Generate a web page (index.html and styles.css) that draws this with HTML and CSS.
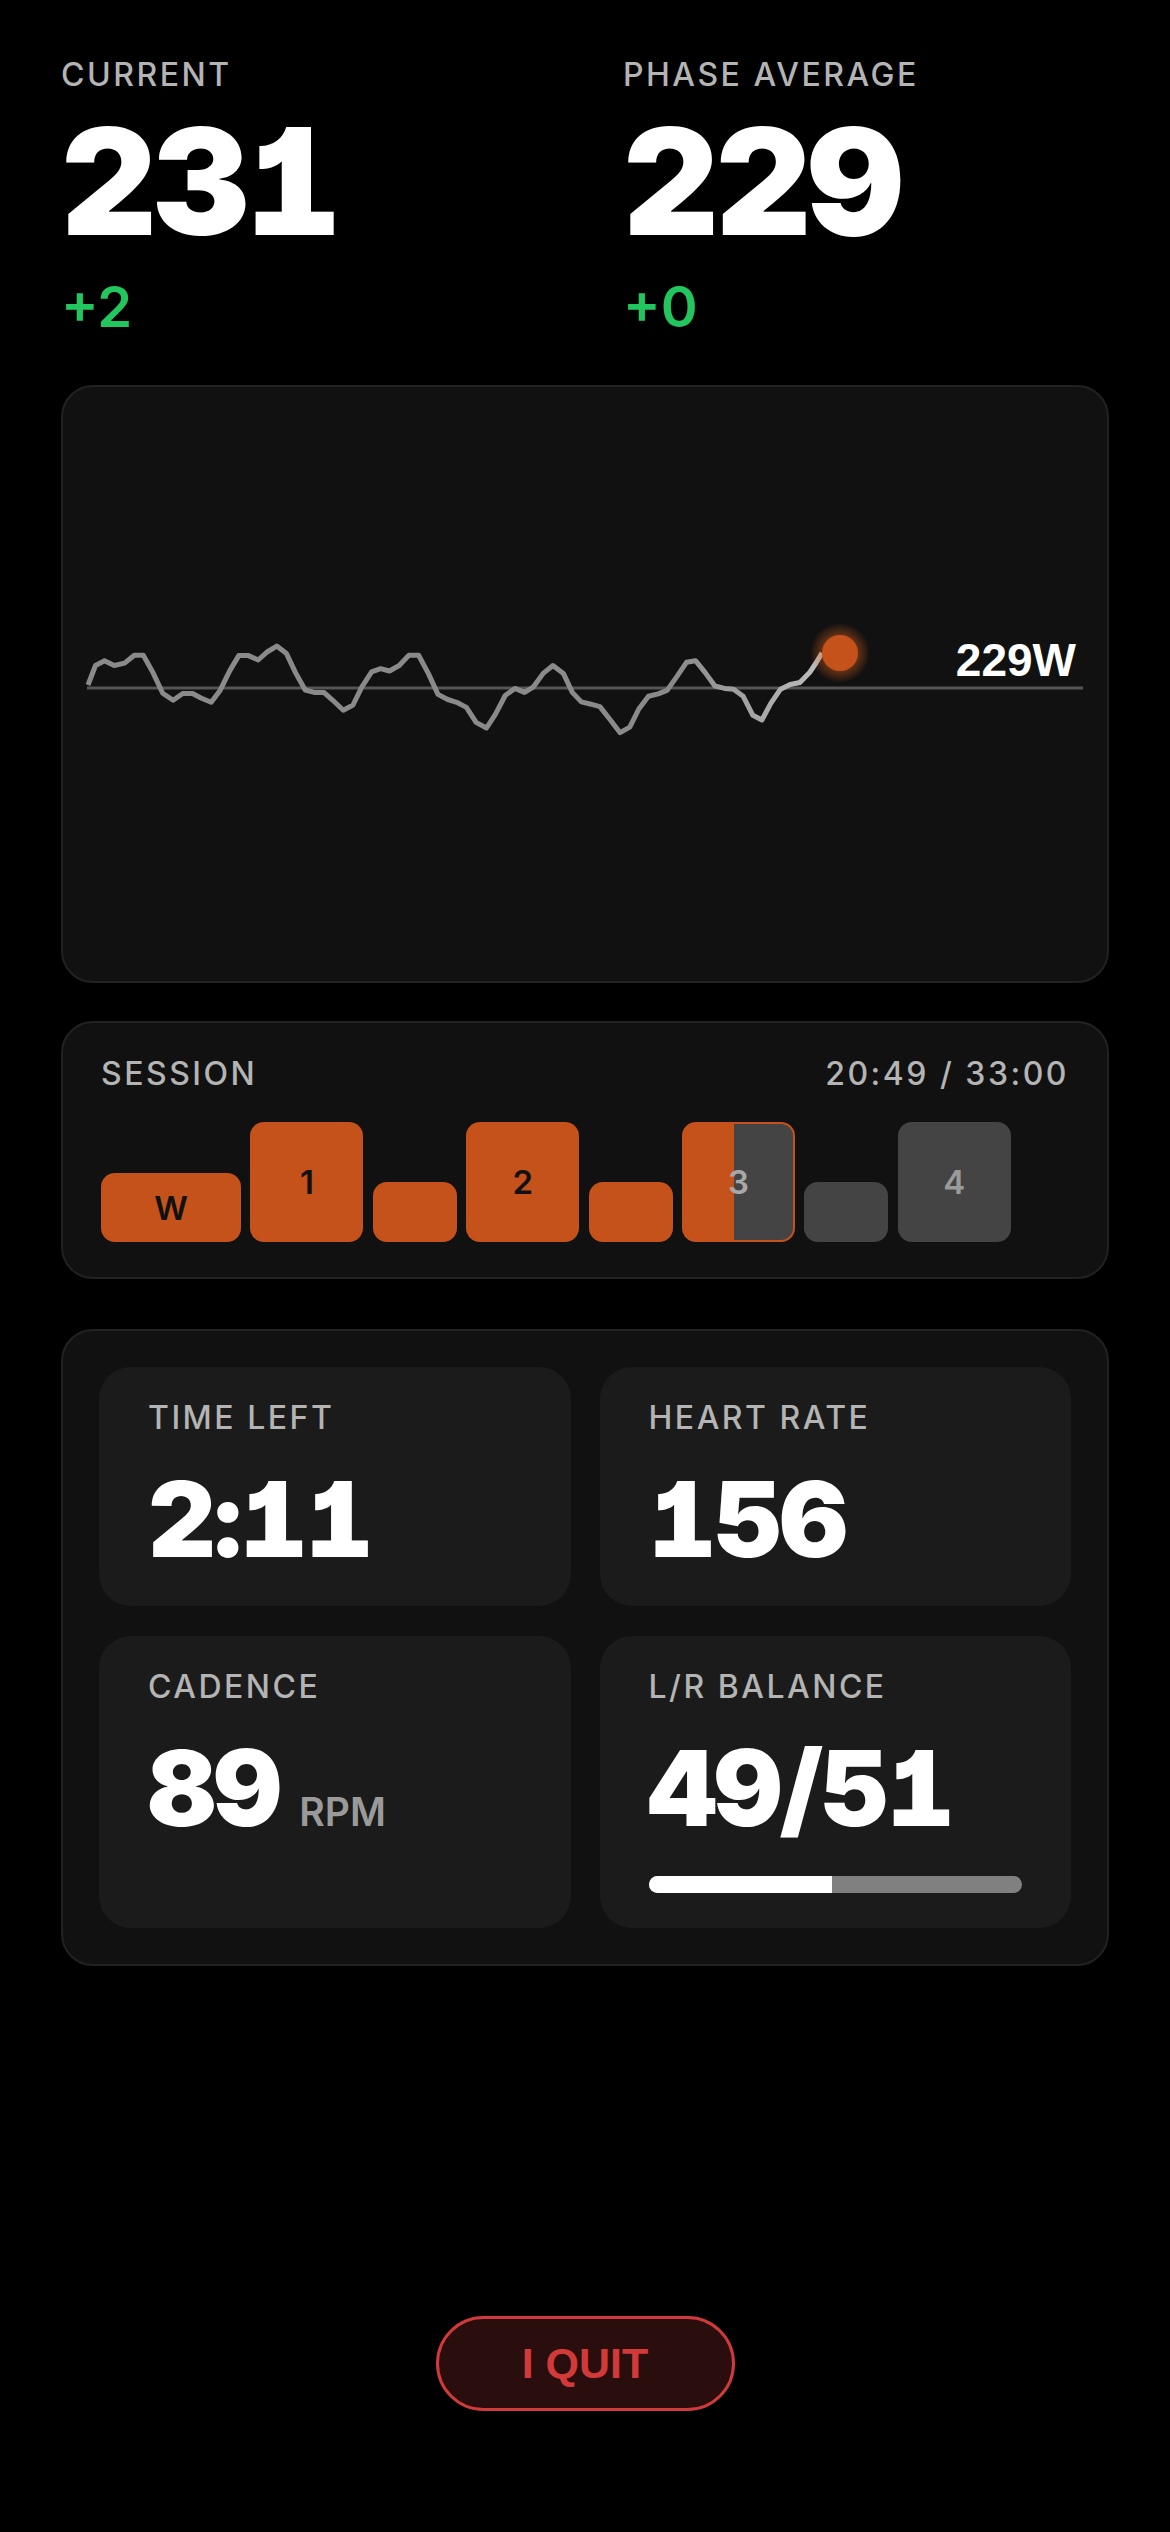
FILE: index.html
```html
<!DOCTYPE html>
<html lang="en">
<head>
    <meta charset="UTF-8">
    <meta name="viewport" content="width=device-width, initial-scale=1.0">
    <title>Workout</title>
    <link rel="stylesheet" href="styles.css">
</head>
<body>
    <div class="app">
        <div class="power">
            <div class="power-item">
                <div class="label">CURRENT</div>
                <div class="big">231</div>
                <div class="delta">+2</div>
            </div>
            <div class="power-item">
                <div class="label">PHASE AVERAGE</div>
                <div class="big">229</div>
                <div class="delta">+0</div>
            </div>
        </div>

        <div class="card chart">
            <svg class="chart-svg" viewBox="2 2 1045 594" width="1045" height="594">
                <defs>
                    <radialGradient id="glow">
                        <stop offset="0.55" stop-color="#e0601e" stop-opacity="0.45"/>
                        <stop offset="1" stop-color="#e0601e" stop-opacity="0"/>
                    </radialGradient>
                    <linearGradient id="fade" x1="0" x2="1" y1="0" y2="0">
                        <stop offset="0.8" stop-color="#8a8a8a"/>
                        <stop offset="1" stop-color="#bdbdbd"/>
                    </linearGradient>
                </defs>
                <line x1="26" y1="303" x2="1022" y2="303" class="target"/>
                <polyline class="trace" points="27,300 34.5,280.5 43.5,275.7 53.2,280.5 63.6,278.1 73.3,270.2 82.3,270.2 92,287.6 101.7,308.2 112.1,315.3 121.8,308.5 131.5,308.5 140.5,313.3 150.2,317.3 159.1,305.4 168.8,285.6 177.8,270.6 187.5,270.6 197.2,275 206.1,267 215.8,261.1 225.5,268.6 234.5,287.6 244.2,305 253.2,307.4 262.9,307.4 271.8,315.3 282.3,325.2 292,320 300.9,301.8 310.6,286.8 319.6,283.7 328.5,286 338.2,280.5 347.9,270.2 357.6,270.2 367.3,288.4 377,309.4 386.7,314.5 395.7,317.3 405.4,322.4 415.1,337.4 425.5,343 434.5,329.1 444.2,310.5 453.9,303.4 463.6,307.4 472.5,301.8 482.2,288.4 491.9,280.5 502.4,288.4 511.3,307.4 520.3,316.9 530,319.2 538.9,321.6 549.4,335 559.1,347.7 568.8,342.2 577.8,324 587.5,311.3 597.2,308.9 606.1,305.4 615.8,291.6 625.5,277.3 634.5,275.7 644.2,287.6 653.9,301 663.6,303.4 672.5,304.2 682.2,311.3 691.9,330.3 700.9,335 709.8,318.4 719.5,304.2 729.2,299.5 738.9,297.5 748.6,287.6 755,278 761,268"/>
                <circle cx="779" cy="268" r="30" fill="url(#glow)"/>
                <circle cx="779" cy="268" r="18" fill="#c6521b"/>
                <text x="1015" y="291" class="target-label">229W</text>
            </svg>
        </div>

        <div class="card session">
            <div class="session-head">
                <span class="label">SESSION</span>
                <span class="label">20:49 / 33:00</span>
            </div>
            <div class="blocks">
                <div class="block warm">W</div>
                <div class="block work">1</div>
                <div class="block rest"></div>
                <div class="block work">2</div>
                <div class="block rest"></div>
                <div class="block work current">3</div>
                <div class="block rest todo"></div>
                <div class="block work todo">4</div>
            </div>
        </div>

        <div class="card stats">
            <div class="tile">
                <div class="label">TIME LEFT</div>
                <div class="value">2:11</div>
            </div>
            <div class="tile">
                <div class="label">HEART RATE</div>
                <div class="value">156</div>
            </div>
            <div class="tile">
                <div class="label">CADENCE</div>
                <div class="value">89<span class="unit">RPM</span></div>
            </div>
            <div class="tile">
                <div class="label">L/R BALANCE</div>
                <div class="value">49/51</div>
                <div class="bar"><div class="bar-fill" style="width: 49%"></div></div>
            </div>
        </div>

        <div class="quit-wrap">
            <button class="quit">I QUIT</button>
        </div>
    </div>
</body>
</html>
```

FILE: styles.css
```css
body {
    margin: 0;
    background-color: #000;
    color: #fff;
    font-family: Inter, "Noto Sans", sans-serif;
}

.app {
    display: flex;
    flex-direction: column;
    min-height: 100vh;
    box-sizing: border-box;
    padding: 56px 61px 121px;
}

.label {
    font-size: 32px;
    line-height: 38px;
    font-weight: 500;
    letter-spacing: 2.5px;
    color: #b4b4b4;
}

.power {
    display: grid;
    grid-template-columns: 1fr 1fr;
    column-gap: 76px;
}

.big {
    margin-top: 14px;
    font-size: 148px;
    line-height: 148px;
    font-weight: 900;
    letter-spacing: -3px;
    font-feature-settings: "tnum", "cv01";
}

.delta {
    margin-top: 18px;
    font-size: 56px;
    line-height: 67px;
    font-weight: 600;
    color: #22c55e;
}

.card {
    background-color: #111;
    border: 2px solid #222;
    border-radius: 32px;
}

.chart {
    margin-top: 44px;
    height: 594px;
}

.chart-svg {
    display: block;
}

.target {
    stroke: #555;
    stroke-width: 3;
}

.trace {
    fill: none;
    stroke: url(#fade);
    stroke-width: 5;
    stroke-linejoin: round;
}

.target-label {
    fill: #fff;
    font-family: "Liberation Sans", Arial, sans-serif;
    font-size: 46px;
    font-weight: 700;
    text-anchor: end;
}

.session {
    margin-top: 38px;
    padding: 32px 38px 35px;
}

.session-head {
    display: flex;
    justify-content: space-between;
}

.blocks {
    display: flex;
    align-items: flex-end;
    gap: 9.4px;
    margin-top: 29px;
}

.block {
    display: flex;
    justify-content: center;
    align-items: center;
    box-sizing: border-box;
    border-radius: 14px;
    font-size: 33px;
    font-weight: 600;
    color: #111;
    background-color: #c4521a;
}

.warm {
    width: 140px;
    height: 69px;
}

.work {
    width: 113px;
    height: 120px;
}

.rest {
    width: 84px;
    height: 60px;
}

.todo {
    background-color: #444;
    color: #9a9a9a;
}

.current {
    background: linear-gradient(to right, #c4521a 46%, #444 46%);
    border: 2px solid #c4521a;
    color: #a8a8a8;
}

.stats {
    display: grid;
    grid-template-columns: 1fr 1fr;
    gap: 30px 29px;
    margin-top: 50px;
    padding: 36px;
}

.tile {
    padding: 32px 49px 35px;
    background-color: #1b1b1b;
    border-radius: 32px;
}

.value {
    margin-top: 29px;
    font-size: 105px;
    line-height: 105px;
    font-weight: 900;
    letter-spacing: -2px;
    font-feature-settings: "tnum", "cv01";
}

.unit {
    margin-left: 20px;
    font-size: 39px;
    font-weight: 600;
    letter-spacing: 0;
    color: #9a9a9a;
}

.bar {
    height: 17px;
    margin-top: 36px;
    border-radius: 9px;
    background-color: #808080;
    overflow: hidden;
}

.bar-fill {
    height: 100%;
    background-color: #fff;
}

.quit-wrap {
    display: flex;
    justify-content: center;
    margin-top: auto;
}

.quit {
    width: 299px;
    height: 95px;
    color: #d23a3a;
    background-color: #2a0e0e;
    border: 3px solid #d03a3a;
    border-radius: 48px;
    font-family: "Liberation Sans", Arial, sans-serif;
    font-size: 43px;
    font-weight: 700;
    cursor: pointer;
}
```
